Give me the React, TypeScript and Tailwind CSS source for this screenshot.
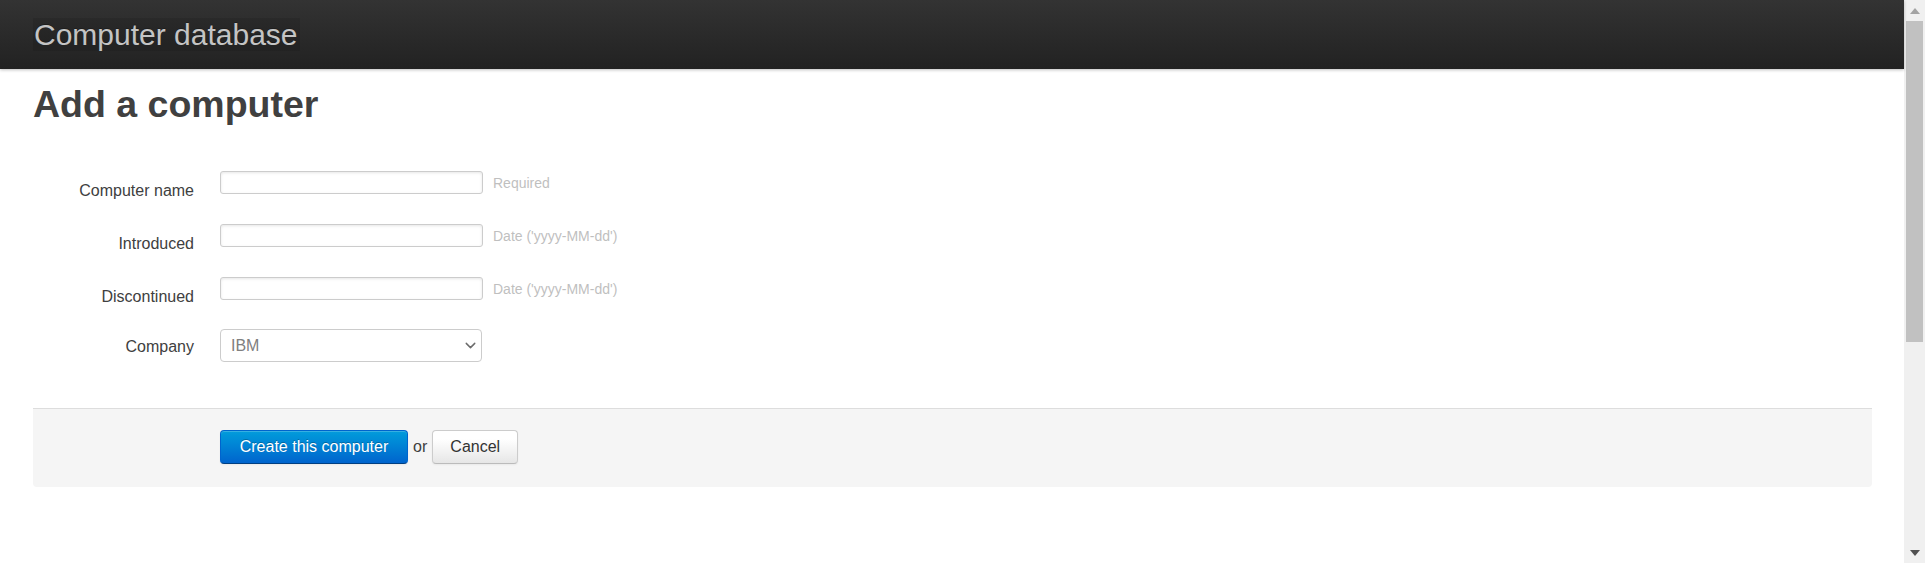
import { ChevronDown } from 'lucide-react';

const FIELDS = [
  { label: 'Computer name', help: 'Required', rowGap: 'mb-[30px]' },
  { label: 'Introduced', help: "Date ('yyyy-MM-dd')", rowGap: 'mb-[30px]' },
  { label: 'Discontinued', help: "Date ('yyyy-MM-dd')", rowGap: 'mb-[29px]' },
];

function Scrollbar() {
  return (
    <div className="w-[21px] shrink-0 h-full bg-[#f0f0f0] flex flex-col items-center">
      {/* up arrow (disabled look, page is at the top) */}
      <div className="h-[21px] w-full flex items-center justify-center">
        <svg width="10" height="6" viewBox="0 0 10 6">
          <path d="M0 6 L5 0 L10 6 Z" fill="#a3a3a3" />
        </svg>
      </div>
      <div className="w-[17px] h-[321px] bg-[#c1c1c1]" />
      <div className="flex-1" />
      <div className="h-[21px] w-full flex items-center justify-center">
        <svg width="10" height="6" viewBox="0 0 10 6">
          <path d="M0 0 L10 0 L5 6 Z" fill="#505050" />
        </svg>
      </div>
    </div>
  );
}

export default function App() {
  return (
    <div className="flex h-[563px] w-full overflow-hidden bg-white font-['Liberation_Sans',Arial,sans-serif]">
      <div className="flex-1 min-w-0 flex flex-col">

        {/* Top bar */}
        <header className="h-[69px] shrink-0 bg-gradient-to-b from-[#333333] to-[#222222] shadow-[0_1px_3px_rgba(0,0,0,0.25)] flex items-center pl-[33px] relative z-10">
          <a className="block h-[33px] leading-[33px] text-[30px] text-[#c4c4c4] bg-black/10 pr-[2px] pl-[1px] [text-shadow:0_-1px_0_rgba(0,0,0,0.25)]">
            Computer database
          </a>
        </header>

        <main className="pl-[33px] pr-[32px]">
          <h1 className="mt-[13px] text-[37.5px] leading-[44px] font-bold text-[#404040]">Add a computer</h1>

          <form className="mt-[45px]">
            {FIELDS.map(f => (
              <div key={f.label} className={`flex items-start h-[23px] ${f.rowGap}`}>
                <label className="w-[161px] shrink-0 text-right pt-[11px] text-[16px] leading-[18px] text-[#404040]">{f.label}</label>
                <input
                  type="text"
                  className="ml-[26px] w-[263px] h-[23px] border border-[#cccccc] rounded-[3px] bg-white shadow-[inset_0_1px_3px_rgba(0,0,0,0.1)] px-[6px] text-[14px]"
                />
                <span className="ml-[10px] pt-[3px] text-[14px] leading-[18px] text-[#bfbfbf]">{f.help}</span>
              </div>
            ))}

            <div className="flex items-start h-[33px]">
              <label className="w-[161px] shrink-0 text-right pt-[9px] text-[16px] leading-[18px] text-[#404040]">Company</label>
              <div className="ml-[26px] relative w-[262px] h-[33px]">
                <select className="appearance-none w-full h-full border border-[#cccccc] rounded-[4px] bg-white pl-[10px] text-[16px] text-[#808080] outline-none">
                  <option>IBM</option>
                </select>
                <ChevronDown size={17} strokeWidth={2} className="absolute right-[3px] top-[8px] text-[#6b6b6b] pointer-events-none" />
              </div>
            </div>

            {/* Actions */}
            <div className="mt-[46px] bg-[#f5f5f5] border-t border-[#dddddd] rounded-b-[4px] pt-[21px] pb-[23px] pl-[187px] flex items-center">
              <button
                type="button"
                className="h-[34px] w-[188px] rounded-[4px] border border-[#0064cd] border-b-[#003f81] bg-gradient-to-b from-[#049cdb] to-[#0064cd] text-white text-[16px] [text-shadow:0_-1px_0_rgba(0,0,0,0.25)] shadow-[inset_0_1px_0_rgba(255,255,255,0.2),0_1px_2px_rgba(0,0,0,0.05)]"
              >
                Create this computer
              </button>
              <span className="mx-[5px] text-[16px] text-[#404040]">or</span>
              <a className="h-[34px] w-[86px] flex items-center justify-center rounded-[4px] border border-[#cccccc] border-b-[#bbbbbb] bg-[linear-gradient(#ffffff,#ffffff_25%,#e6e6e6)] text-[16px] text-[#333333] shadow-[inset_0_1px_0_rgba(255,255,255,0.2),0_1px_2px_rgba(0,0,0,0.05)]">
                Cancel
              </a>
            </div>
          </form>
        </main>
      </div>
      <Scrollbar />
    </div>
  );
}
